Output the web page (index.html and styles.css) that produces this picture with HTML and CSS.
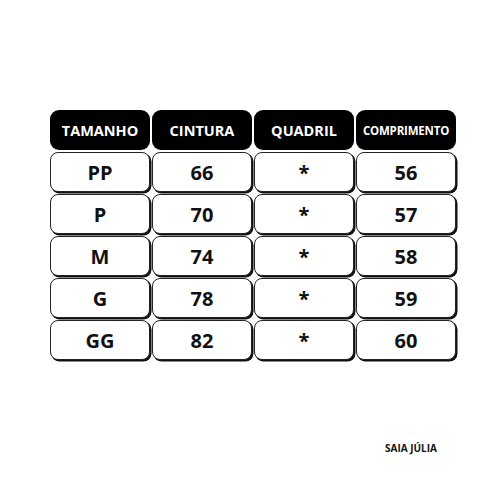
FILE: index.html
```html
<!DOCTYPE html>
<html>
<head>
<meta charset="utf-8">
<link rel="stylesheet" href="styles.css">
</head>
<body>
<div class="page">
  <div class="grid">
    <div class="head">TAMANHO</div>
    <div class="head">CINTURA</div>
    <div class="head">QUADRIL</div>
    <div class="head small">COMPRIMENTO</div>

    <div class="cell">PP</div><div class="cell">66</div><div class="cell">*</div><div class="cell">56</div>
    <div class="cell">P</div><div class="cell">70</div><div class="cell">*</div><div class="cell">57</div>
    <div class="cell">M</div><div class="cell">74</div><div class="cell">*</div><div class="cell">58</div>
    <div class="cell">G</div><div class="cell">78</div><div class="cell">*</div><div class="cell">59</div>
    <div class="cell">GG</div><div class="cell">82</div><div class="cell">*</div><div class="cell">60</div>
  </div>
  <div class="caption">SAIA JÚLIA</div>
</div>
</body>
</html>
```
FILE: styles.css
```css
html, body {
  margin: 0;
  padding: 0;
  background: #fff;
}
.page {
  width: 500px;
  height: 500px;
  font-family: "Open Sans", "DejaVu Sans", sans-serif;
  font-weight: 700;
  color: #111;
  padding: 110px 0 0 50px;
  box-sizing: border-box;
}
.grid {
  display: grid;
  grid-template-columns: repeat(4, 100px);
  grid-template-rows: 40px repeat(5, 40px);
  column-gap: 2px;
  row-gap: 2px;
}
.head {
  background: #000;
  color: #fff;
  border-radius: 9px;
  display: flex;
  align-items: center;
  justify-content: center;
  font-size: 14.5px;
}
.head.small {
  font-size: 11.5px;
  letter-spacing: -0.2px;
}
.cell {
  background: #fff;
  border: 1px solid #222;
  border-radius: 8px;
  box-shadow: 1.5px 1.5px 0 #111;
  box-sizing: border-box;
  display: flex;
  align-items: center;
  justify-content: center;
  font-size: 20px;
}
.caption {
  margin: 81px 0 0 335px;
  font-size: 10px;
  color: #111;
}
```
